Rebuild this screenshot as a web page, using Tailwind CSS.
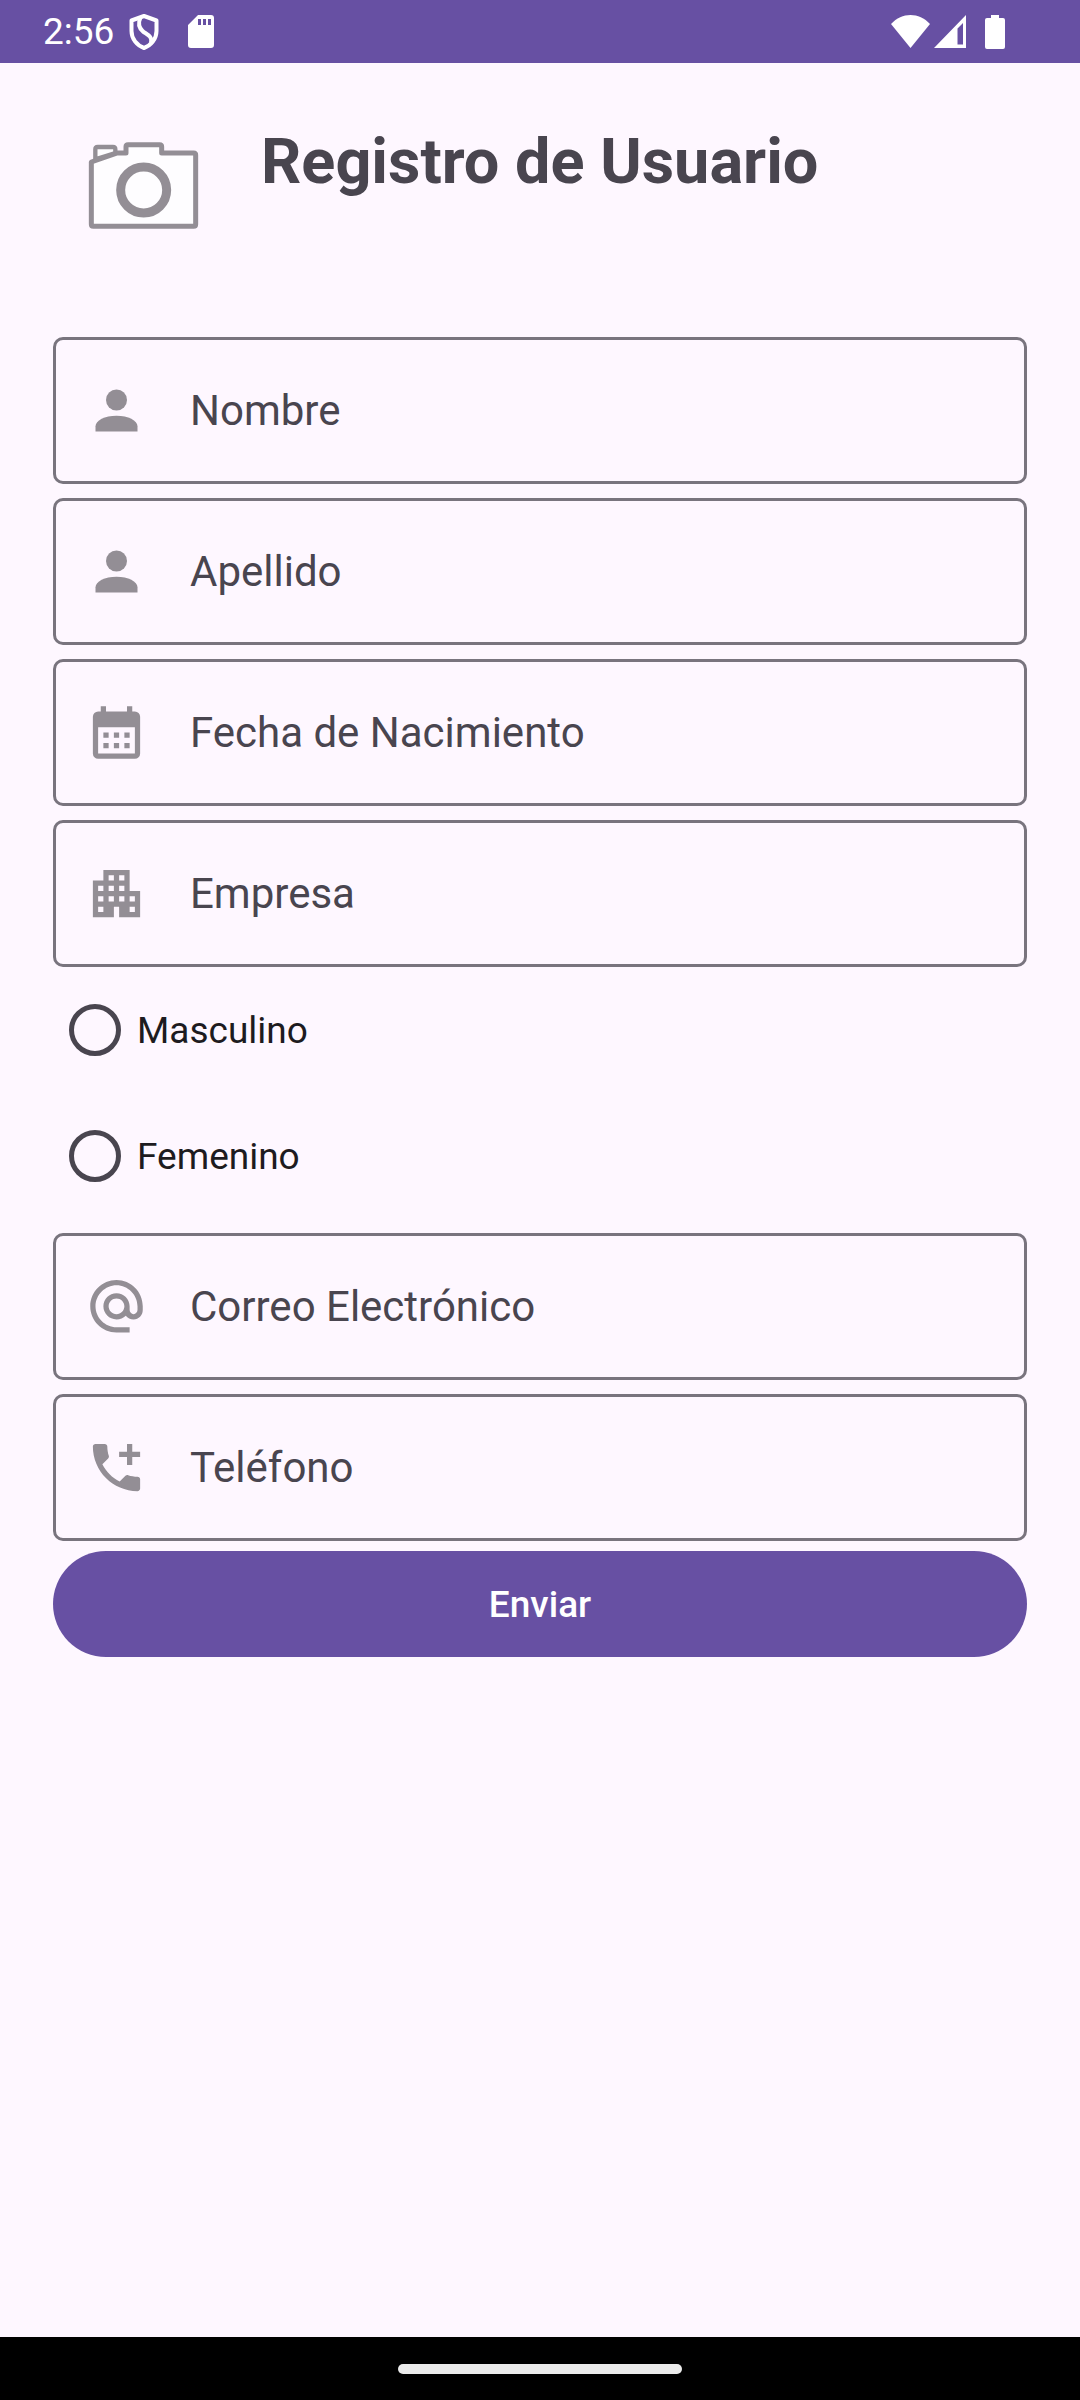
<!DOCTYPE html>
<html lang="es">
<head>
<meta charset="utf-8">
<meta name="viewport" content="width=device-width, initial-scale=1">
<title>Registro de Usuario</title>
<script src="https://cdn.jsdelivr.net/npm/@tailwindcss/browser@4"></script>
</head>
<body class="flex min-h-screen flex-col bg-[#fef7ff] font-['Roboto',sans-serif] text-[#1d1b20]">

  <!-- Status bar -->
  <header class="flex h-[63px] items-center justify-between bg-[#6750a3] pr-[75px] pl-[43px] text-white">
    <div class="flex items-center">
      <time class="text-[37px] leading-none">2:56</time>
      <svg class="ml-[15px] h-9 w-[30px]" viewBox="0 0 30 36" fill="none" stroke="currentColor" stroke-width="4" stroke-linejoin="round" aria-hidden="true">
        <path d="M15 2 27.500 6.500V17C27.500 25 22 31.500 15 34 8 31.500 2.500 25 2.500 17V6.500Z"/>
        <path d="M11.500 3.500C8.500 10 10 14 14 17.500 19 21 23.500 22.500 22 29"/>
      </svg>
      <svg class="ml-[29px] h-[33px] w-[26px]" viewBox="0 0 26 33" fill="currentColor" fill-rule="evenodd" aria-hidden="true">
        <path d="M10 0H23a3 3 0 0 1 3 3V30a3 3 0 0 1-3 3H3a3 3 0 0 1-3-3V10ZM10 4v6h3V4ZM15 4v6h3V4ZM20 4v6h3V4Z"/>
      </svg>
    </div>
    <div class="flex items-center">
      <svg class="h-[33px] w-[39px]" viewBox="0 0 39 33" fill="currentColor" aria-hidden="true"><path d="M0 9C11-3 28-3 39 9L19.500 33Z"/></svg>
      <svg class="ml-1 h-[33px] w-8" viewBox="0 0 32 33" fill="currentColor" fill-rule="evenodd" aria-hidden="true"><path d="M32 0V33H0ZM29 8 23.500 13.500V29.500H29Z"/></svg>
      <svg class="ml-[19px] h-[34px] w-5" viewBox="0 0 20 34" fill="currentColor" aria-hidden="true"><path d="M6 0h8v3h4a2 2 0 0 1 2 2V32a2 2 0 0 1-2 2H2a2 2 0 0 1-2-2V5a2 2 0 0 1 2-2H6Z"/></svg>
    </div>
  </header>

  <main class="grow px-[53px] pt-[61px]">
    <div class="flex h-[213px] items-start gap-[62px] pl-[34px]">
      <svg class="mt-[17px] h-[90px] w-[112px]" viewBox="141 93 336 270" fill="#fefdff" stroke="#938e95" stroke-width="15" stroke-linejoin="round" aria-hidden="true">
        <path d="M154 343V156L232 129H258V110Q258 104 264 104H359Q365 104 365 110V129H461Q467 129 467 135V343Q467 349 461 349H160Q154 349 154 343Z"/>
        <path d="M166 148V118Q166 111 173 111H219Q226 111 226 118V129Z" stroke-width="13"/>
        <circle cx="311" cy="240" r="69" stroke-width="27"/>
      </svg>
      <h1 class="text-[63px] leading-[76px] font-bold text-[#49454f]">Registro de Usuario</h1>
    </div>

    <form>
      <div class="flex flex-col gap-[14px]">
        <label class="flex h-[147px] items-center gap-[42px] rounded-[10px] border-3 border-[#79747e] px-[29px]">
          <svg class="size-[63px] shrink-0 text-[#938e95]" viewBox="0 0 24 24" fill="currentColor" aria-hidden="true"><circle cx="12" cy="8" r="4"/><path d="M12 14c-4.420 0-8 1.790-8 4v2h16v-2c0-2.210-3.580-4-8-4z"/></svg>
          <input type="text" name="nombre" aria-label="Nombre" placeholder="Nombre" class="min-w-0 grow text-[42px] outline-none placeholder:text-[#49454f]">
        </label>
        <label class="flex h-[147px] items-center gap-[42px] rounded-[10px] border-3 border-[#79747e] px-[29px]">
          <svg class="size-[63px] shrink-0 text-[#938e95]" viewBox="0 0 24 24" fill="currentColor" aria-hidden="true"><circle cx="12" cy="8" r="4"/><path d="M12 14c-4.420 0-8 1.790-8 4v2h16v-2c0-2.210-3.580-4-8-4z"/></svg>
          <input type="text" name="apellido" aria-label="Apellido" placeholder="Apellido" class="min-w-0 grow text-[42px] outline-none placeholder:text-[#49454f]">
        </label>
        <label class="flex h-[147px] items-center gap-[42px] rounded-[10px] border-3 border-[#79747e] px-[29px]">
          <svg class="size-[63px] shrink-0 text-[#938e95]" viewBox="0 0 24 24" fill="currentColor" fill-rule="evenodd" aria-hidden="true"><path d="M6 2h2v2h8V2h2v2h1a2 2 0 0 1 2 2v14a2 2 0 0 1-2 2H5a2 2 0 0 1-2-2V6a2 2 0 0 1 2-2h1zM5 10v10h14V10zM7 12h2v2H7zM11 12h2v2h-2zM15 12h2v2h-2zM7 16h2v2H7zM11 16h2v2h-2zM15 16h2v2h-2z"/></svg>
          <input type="text" name="nacimiento" aria-label="Fecha de Nacimiento" placeholder="Fecha de Nacimiento" class="min-w-0 grow text-[42px] outline-none placeholder:text-[#49454f]">
        </label>
        <label class="flex h-[147px] items-center gap-[42px] rounded-[10px] border-3 border-[#79747e] px-[29px]">
          <svg class="size-[63px] shrink-0 text-[#938e95]" viewBox="0 0 24 24" fill="currentColor" aria-hidden="true"><path d="M17 11V3H7v4H3v14h8v-4h2v4h8V11h-4zM7 19H5v-2h2v2zm0-4H5v-2h2v2zm0-4H5V9h2v2zm4 4H9v-2h2v2zm0-4H9V9h2v2zm0-4H9V5h2v2zm4 8h-2v-2h2v2zm0-4h-2V9h2v2zm0-4h-2V5h2v2zm4 12h-2v-2h2v2zm0-4h-2v-2h2v2z"/></svg>
          <input type="text" name="empresa" aria-label="Empresa" placeholder="Empresa" class="min-w-0 grow text-[42px] outline-none placeholder:text-[#49454f]">
        </label>
      </div>

      <fieldset class="pb-[14px]" aria-label="Sexo">
        <label class="flex h-[126px] items-center gap-4 pl-4 text-[37px]">
          <input type="radio" name="sexo" value="masculino" class="size-[52px] appearance-none rounded-full border-5 border-[#49454f] checked:border-[16px] checked:border-[#6750a3]">
          <span class="pt-[2px]">Masculino</span>
        </label>
        <label class="flex h-[126px] items-center gap-4 pl-4 text-[37px]">
          <input type="radio" name="sexo" value="femenino" class="size-[52px] appearance-none rounded-full border-5 border-[#49454f] checked:border-[16px] checked:border-[#6750a3]">
          <span class="pt-[2px]">Femenino</span>
        </label>
      </fieldset>

      <div class="flex flex-col gap-[14px]">
        <label class="flex h-[147px] items-center gap-[42px] rounded-[10px] border-3 border-[#79747e] px-[29px]">
          <svg class="size-[63px] shrink-0 text-[#938e95]" viewBox="0 0 24 24" fill="currentColor" aria-hidden="true"><path d="M12 1.950c-5.520 0-10 4.480-10 10s4.480 10 10 10h5v-2h-5c-4.340 0-8-3.660-8-8s3.660-8 8-8 8 3.660 8 8v1.430c0 .79-.71 1.570-1.500 1.570s-1.500-.78-1.500-1.570v-1.430c0-2.760-2.240-5-5-5s-5 2.240-5 5 2.240 5 5 5c1.380 0 2.640-.56 3.540-1.470.65.89 1.770 1.470 2.960 1.470 1.970 0 3.500-1.600 3.500-3.570v-1.430c0-5.520-4.480-10-10-10zm0 13c-1.660 0-3-1.340-3-3s1.340-3 3-3 3 1.340 3 3-1.340 3-3 3z"/></svg>
          <input type="email" name="correo" aria-label="Correo Electrónico" placeholder="Correo Electrónico" class="min-w-0 grow text-[42px] outline-none placeholder:text-[#49454f]">
        </label>
        <label class="flex h-[147px] items-center gap-[42px] rounded-[10px] border-3 border-[#79747e] px-[29px]">
          <svg class="size-[63px] shrink-0 text-[#938e95]" viewBox="0 0 24 24" fill="currentColor" aria-hidden="true"><path d="M20 15.500c-1.250 0-2.450-.2-3.570-.57-.35-.11-.74-.03-1.020.24l-2.200 2.200c-2.830-1.440-5.150-3.750-6.590-6.590l2.200-2.210c.28-.26.36-.65.25-1C8.700 6.450 8.500 5.250 8.500 4c0-.55-.45-1-1-1H4c-.55 0-1 .45-1 1 0 9.390 7.610 17 17 17 .55 0 1-.45 1-1v-3.500c0-.55-.45-1-1-1zM21 6h-3V3h-2v3h-3v2h3v3h2V8h3z"/></svg>
          <input type="tel" name="telefono" aria-label="Teléfono" placeholder="Teléfono" class="min-w-0 grow text-[42px] outline-none placeholder:text-[#49454f]">
        </label>
      </div>

      <button type="submit" class="mt-[10px] h-[106px] w-full rounded-full bg-[#6750a3] pt-[2px] text-[37px] font-medium text-white">Enviar</button>
    </form>
  </main>

  <!-- Gesture navigation bar -->
  <footer class="flex h-[63px] items-center justify-center bg-black">
    <div class="h-[10px] w-[284px] rounded-full bg-[#ebebeb]"></div>
  </footer>
</body>
</html>
